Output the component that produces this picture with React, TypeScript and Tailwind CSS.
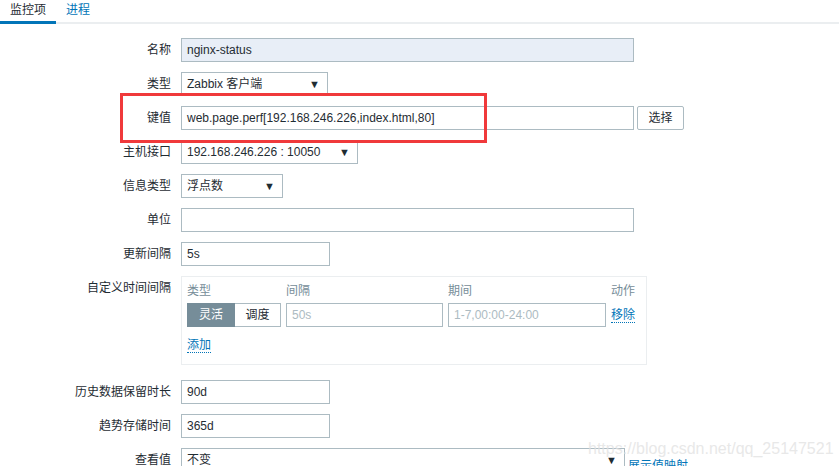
import * as React from "react";

const font = "font-['Liberation_Sans','Noto_Sans_CJK_SC',sans-serif]";
const box = "h-6 border border-[#acbbc2] bg-white px-[5px] flex items-center text-[12px] text-[#1f2c33]";

function Row({ label, children, className = "" }: { label: string; children: React.ReactNode; className?: string }) {
  return (
    <div className={`flex items-start ${className}`}>
      <div className="w-[171px] shrink-0 text-right text-[12px] leading-6 text-[#1f2c33]">{label}</div>
      <div className="ml-[10px] flex items-center gap-[3px]">{children}</div>
    </div>
  );
}

function Select({ value, width }: { value: string; width: string }) {
  return (
    <div className={`${box} ${width} justify-between`}>
      <span>{value}</span>
      <span className="text-[11px] pr-[2px]">▼</span>
    </div>
  );
}

export default function App() {
  return (
    <div className={`relative w-[839px] h-[466px] overflow-hidden bg-white ${font}`}>
      {/* Tabs */}
      <div className="flex h-[24px] border-b-2 border-[#ebeef0] text-[12px]">
        <div className="w-[56px] h-[24px] border-b-[3px] border-[#0275b8] pt-[1px] pl-[10px] text-[#1f2c33]">监控项</div>
        <div className="pl-[10px] pt-[1px] text-[#0275b8]">进程</div>
      </div>

      {/* Form */}
      <div className="flex flex-col gap-[10px] pt-[14px]">
        <Row label="名称">
          <div className={`${box} w-[453px] !bg-[#e8eef7]`}>nginx-status</div>
        </Row>
        <Row label="类型">
          <Select value="Zabbix 客户端" width="w-[147px]" />
        </Row>
        <Row label="键值">
          <div className={`${box} w-[453px]`}>web.page.perf[192.168.246.226,index.html,80]</div>
          <button className="h-6 w-[47px] rounded-[2px] border border-[#acbbc2] bg-white text-[12px] text-[#1f2c33]">选择</button>
        </Row>
        <Row label="主机接口">
          <Select value="192.168.246.226 : 10050" width="w-[177px]" />
        </Row>
        <Row label="信息类型">
          <Select value="浮点数" width="w-[102px]" />
        </Row>
        <Row label="单位">
          <div className={`${box} w-[453px]`}></div>
        </Row>
        <Row label="更新间隔">
          <div className={`${box} w-[149px]`}>5s</div>
        </Row>
        <Row label="自定义时间间隔">
          <div className="w-[466px] h-[89px] border border-[#ebeef0] px-[5px] pt-[5px]">
            <div className="grid grid-cols-[94px_157px_158px_auto] gap-x-[5px] text-[12px]">
              <div className="text-[#768d99] leading-[18px]">类型</div>
              <div className="text-[#768d99] leading-[18px]">间隔</div>
              <div className="text-[#768d99] leading-[18px]">期间</div>
              <div className="text-[#768d99] leading-[18px]">动作</div>
              <div className="flex h-6 mt-[3px]">
                <div className="w-[48px] bg-[#768d99] text-white flex items-center justify-center">灵活</div>
                <div className="w-[46px] border border-l-0 border-[#acbbc2] flex items-center justify-center text-[#1f2c33]">调度</div>
              </div>
              <div className={`${box} mt-[3px] !text-[#acbbc2]`}>50s</div>
              <div className={`${box} mt-[3px] !text-[#acbbc2]`}>1-7,00:00-24:00</div>
              <div className="mt-[3px] flex items-center">
                <span className="text-[#0275b8] border-b border-dotted border-[#0275b8] leading-[14px]">移除</span>
              </div>
            </div>
            <div className="mt-[9px] text-[12px]">
              <span className="text-[#0275b8] border-b border-dotted border-[#0275b8] leading-[14px]">添加</span>
            </div>
          </div>
        </Row>
        <Row label="历史数据保留时长" className="mt-[5px]">
          <div className={`${box} w-[149px]`}>90d</div>
        </Row>
        <Row label="趋势存储时间">
          <div className={`${box} w-[149px]`}>365d</div>
        </Row>
        <Row label="查看值">
          <Select value="不变" width="w-[444px]" />
          <span className="text-[12px] text-[#0275b8] self-end leading-[14px] -mb-[1px]">展示值映射</span>
        </Row>
      </div>

      {/* Annotation */}
      <div className="absolute left-[120px] top-[93px] w-[367px] h-[50px] border-[3px] border-[#f0393b]" />

      {/* Watermark */}
      <div className="absolute left-[588px] top-[437px] text-[16px] text-[#e2e2e2]/80 font-['Liberation_Sans',sans-serif]">
        https://blog.csdn.net/qq_25147521
      </div>
    </div>
  );
}
